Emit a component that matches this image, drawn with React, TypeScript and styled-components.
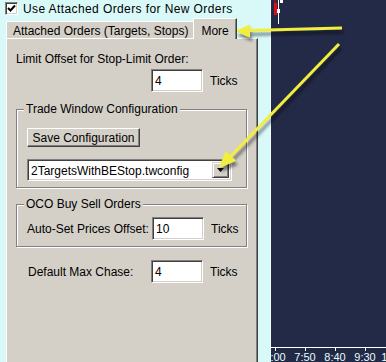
import React from 'react'
import styled, { createGlobalStyle } from 'styled-components'

const GlobalStyle = createGlobalStyle`
  html, body {
    margin: 0;
    padding: 0;
    background: #d9f9f9;
  }
  body {
    font-family: "Liberation Sans", Arial, sans-serif;
    font-size: 12px;
    color: #000;
  }
`

const Screen = styled.div`
  position: relative;
  display: flex;
  width: 386px;
  height: 362px;
  overflow: hidden;
  background: #d9f9f9;
`

const Dialog = styled.div`
  flex: 0 0 270px;
  display: flex;
  flex-direction: column;
  padding-left: 6px;
  box-sizing: border-box;
`

const CheckRow = styled.div`
  display: flex;
  align-items: center;
  gap: 5px;
  height: 16px;
  padding-top: 1px;
  margin-left: -1px;
  box-sizing: border-box;
  line-height: 14px;
  letter-spacing: 0.4px;
`

const CheckBox = styled.span`
  display: flex;
  align-items: center;
  justify-content: center;
  width: 13px;
  height: 13px;
  box-sizing: border-box;
  background: #fff;
  border: 1px solid;
  border-color: #808080 #fff #fff #808080;
  box-shadow: inset 1px 1px 0 #404040, inset -1px -1px 0 #d4d0c8;
`

const TabStrip = styled.div`
  position: relative;
  z-index: 1;
  display: flex;
  align-items: flex-end;
  height: 21px;
  margin-top: 2px;
  margin-bottom: -1px;
`

const Tab = styled.div<{ $active?: boolean }>`
  box-sizing: border-box;
  background: #d4d0c8;
  border-top: 1px solid #fff;
  border-left: 1px solid #fff;
  line-height: ${(p) => (p.$active ? '14px' : '13px')};
  height: ${(p) => (p.$active ? '21px' : '17px')};
  margin-bottom: ${(p) => (p.$active ? '0' : '1px')};
  padding: ${(p) => (p.$active ? '5px 7px 0 7px' : '3px 5px 0 6px')};
  border-right: ${(p) => (p.$active ? '1px solid #404040' : 'none')};
  box-shadow: ${(p) => (p.$active ? 'inset -1px 0 0 #808080' : 'none')};
  white-space: nowrap;
`

const Panel = styled.div`
  flex: 1;
  width: 252px;
  box-sizing: border-box;
  background: #d4d0c8;
  border-top: 1px solid #fff;
  border-left: 1px solid #fff;
  border-right: 1px solid #404040;
  box-shadow: inset -1px 0 0 #808080;
  padding: 13px 0 0 9px;
  line-height: 14px;
`

const Caption = styled.div`
  line-height: 14px;
`

const FieldRow = styled.div<{ $label: number; $indent?: number }>`
  display: grid;
  grid-template-columns: ${(p) => p.$label}px 52px auto;
  align-items: center;
  padding-left: ${(p) => p.$indent ?? 0}px;
`

const Unit = styled.span`
  margin-left: 7px;
`

const TextBox = styled.div`
  box-sizing: border-box;
  height: 23px;
  padding: 4px 0 0 3px;
  background: #fff;
  border: 1px solid;
  border-color: #808080 #fff #fff #808080;
  box-shadow: inset 1px 1px 0 #404040, inset -1px -1px 0 #d4d0c8;
  line-height: 14px;
`

const Group = styled.fieldset<{ $top: number }>`
  width: 231px;
  box-sizing: border-box;
  margin: ${(p) => p.$top}px 0 0 0;
  padding: 0 0 6px 10px;
  border: 1px solid #808080;
  box-shadow: 1px 1px 0 #fff, inset 1px 1px 0 #fff;
  min-inline-size: 0;
`

const Legend = styled.legend`
  padding: 0 2px;
  margin-left: -3px;
  line-height: 14px;
  background: #d4d0c8;
`

const Button = styled.div`
  display: flex;
  align-items: center;
  justify-content: center;
  width: 113px;
  height: 19px;
  margin-top: 12px;
  box-sizing: border-box;
  border: 1px solid;
  border-color: #fff #404040 #404040 #fff;
  box-shadow: inset -1px -1px 0 #808080;
`

const Combo = styled.div`
  display: flex;
  align-items: center;
  width: 205px;
  height: 22px;
  margin-top: 12px;
  box-sizing: border-box;
  padding: 2px;
  background: #fff;
  border: 1px solid;
  border-color: #808080 #fff #fff #808080;
  box-shadow: inset 1px 1px 0 #404040, inset -1px -1px 0 #d4d0c8;
`

const ComboText = styled.span`
  flex: 1;
  padding-left: 1px;
  padding-top: 1px;
  white-space: nowrap;
  overflow: hidden;
`

const DropButton = styled.span`
  display: flex;
  align-items: center;
  justify-content: center;
  width: 17px;
  height: 100%;
  box-sizing: border-box;
  background: #d4d0c8;
  border: 1px solid;
  border-color: #d4d0c8 #404040 #404040 #d4d0c8;
  box-shadow: inset 1px 1px 0 #fff, inset -1px -1px 0 #808080;
`

const Chart = styled.div`
  flex: 1;
  display: flex;
  flex-direction: column;
  background: #232a47;
  border-left: 1px solid #eefcfc;
  overflow: hidden;
`

const Plot = styled.div`
  flex: 1;
`

const Axis = styled.div`
  display: flex;
  height: 15px;
  box-sizing: border-box;
  border-top: 1px solid #fff;
  margin-left: -11px;
`

const AxisLabel = styled.span`
  position: relative;
  flex: 0 0 30px;
  text-align: center;
  padding-top: 4px;
  font-size: 11px;
  line-height: 10px;
  color: #e6ffff;
  white-space: nowrap;
  &::before {
    content: '';
    position: absolute;
    left: 15px;
    top: 0;
    width: 1px;
    height: 3px;
    background: #fff;
  }
`

const Overlay = styled.svg`
  position: absolute;
  left: 0;
  top: 0;
  pointer-events: none;
`

const times = ['7:00', '7:50', '8:40', '9:30', '10:20']

function Arrows() {
  const yellow = '#f2ee3c'
  return (
    <Overlay width={386} height={362} viewBox="0 0 386 362">
      <defs>
        <filter id="shade" x="-20%" y="-20%" width="140%" height="140%">
          <feDropShadow dx="2" dy="4" stdDeviation="1.8" floodColor="#000" floodOpacity="0.45" />
        </filter>
      </defs>
      <g filter="url(#shade)">
        <line x1={342} y1={28} x2={248} y2={30.5} stroke={yellow} strokeWidth={3} />
        <polygon points="235,31 250,24.5 250,37.5" fill={yellow} />
        <line x1={339} y1={44} x2={231} y2={156} stroke={yellow} strokeWidth={3} />
        <polygon points="219,168 236,160.7 225.6,150.8" fill={yellow} />
      </g>
    </Overlay>
  )
}

export default function App() {
  return (
    <>
      <GlobalStyle />
      <Screen>
        <Dialog>
          <CheckRow>
            <CheckBox>
              <svg width="9" height="9" viewBox="0 0 9 9">
                <polyline points="1,4 3.5,6.5 8,1.5" fill="none" stroke="#000" strokeWidth="2" />
              </svg>
            </CheckBox>
            <span>Use Attached Orders for New Orders</span>
          </CheckRow>
          <TabStrip>
            <Tab>Attached Orders (Targets, Stops)</Tab>
            <Tab $active>More</Tab>
          </TabStrip>
          <Panel>
            <Caption>Limit Offset for Stop-Limit Order:</Caption>
            <FieldRow $label={135} style={{ marginTop: 3 }}>
              <span />
              <TextBox>4</TextBox>
              <Unit>Ticks</Unit>
            </FieldRow>
            <Group $top={10}>
              <Legend>Trade Window Configuration</Legend>
              <Button>Save Configuration</Button>
              <Combo>
                <ComboText>2TargetsWithBEStop.twconfig</ComboText>
                <DropButton>
                  <svg width="7" height="4" viewBox="0 0 7 4">
                    <polygon points="0,0 7,0 3.5,4" fill="#000" />
                  </svg>
                </DropButton>
              </Combo>
            </Group>
            <Group $top={9}>
              <Legend>OCO Buy Sell Orders</Legend>
              <FieldRow $label={125} style={{ marginTop: 6 }}>
                <span>Auto-Set Prices Offset:</span>
                <TextBox>10</TextBox>
                <Unit>Ticks</Unit>
              </FieldRow>
            </Group>
            <FieldRow $label={123} $indent={12} style={{ marginTop: 13 }}>
              <span>Default Max Chase:</span>
              <TextBox>4</TextBox>
              <Unit>Ticks</Unit>
            </FieldRow>
          </Panel>
        </Dialog>
        <Chart>
          <Plot>
            <svg width="16" height="26" viewBox="0 0 16 26">
              <rect x="3.5" y="0" width="1" height="3" fill="#e01010" />
              <rect x="3" y="3" width="3" height="12" fill="#e01010" />
              <rect x="7" y="0" width="1" height="24" fill="#fff" />
              <rect x="6" y="9" width="3" height="4" fill="#fff" />
              <rect x="9" y="0" width="3" height="3" fill="#fff" />
            </svg>
          </Plot>
          <Axis>
            {times.map((t) => (
              <AxisLabel key={t}>{t}</AxisLabel>
            ))}
          </Axis>
        </Chart>
        <Arrows />
      </Screen>
    </>
  )
}
